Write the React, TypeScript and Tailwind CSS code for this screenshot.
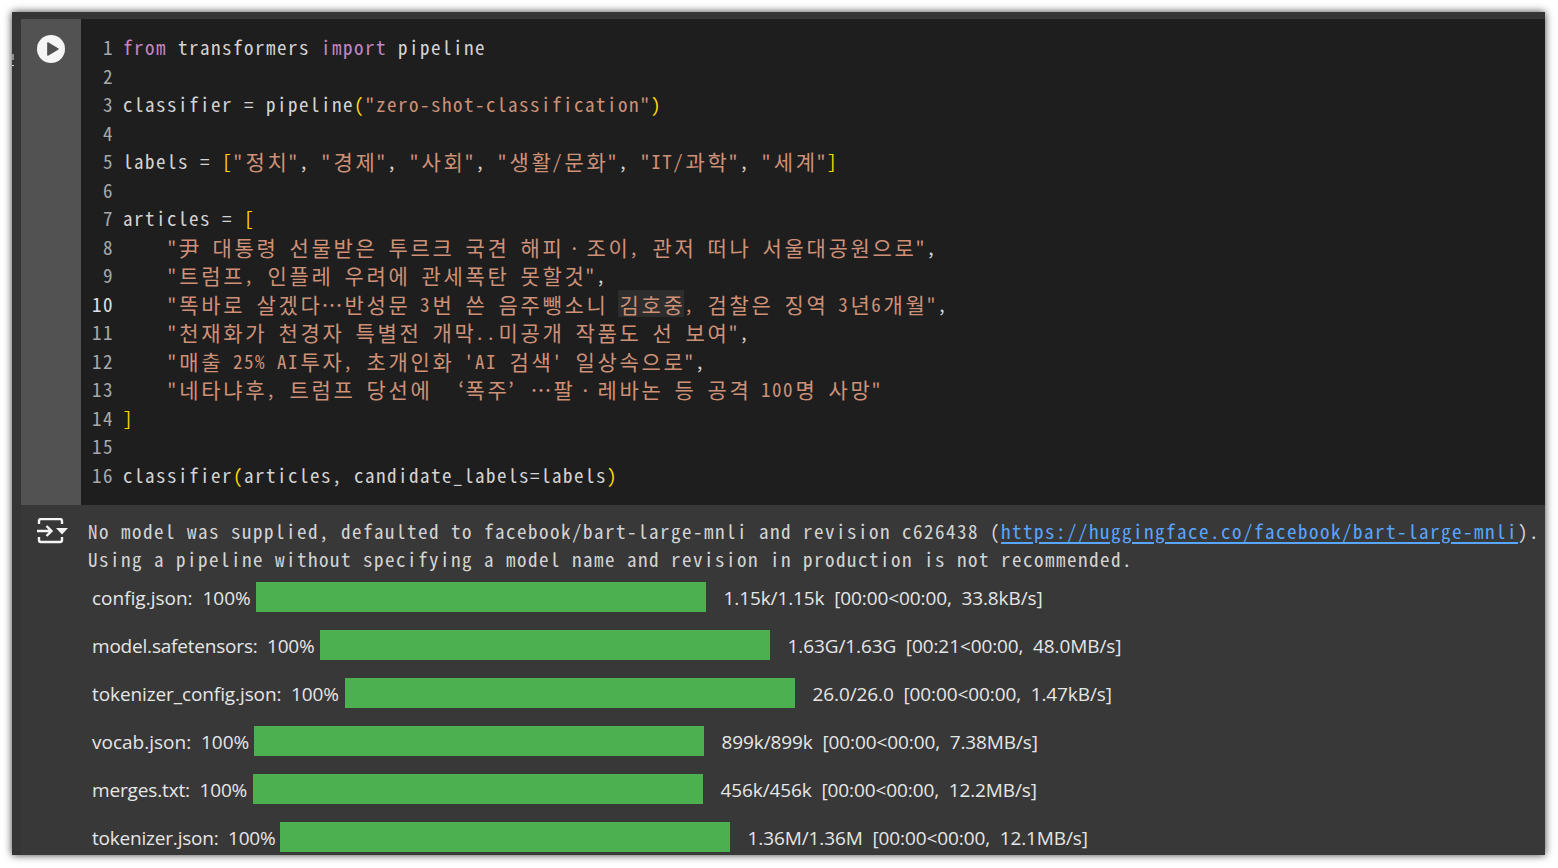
const WIDE = /([\u2018\u2019\u2026\u3000-\u9fff\uac00-\ud7af]+)/;

function cellAlign(ch: string) {
  if (ch === "\u2018") return "text-right";
  if (ch === "\u2019") return "text-left";
  return "text-center";
}

function T({ s }: { s: string }) {
  return (
    <>
      {s.split(WIDE).map((part, i) =>
        part === "" ? null : WIDE.test(part) ? (
          <span key={i}>
            {Array.from(part).map((ch, k) => (
              <span key={k} className={`inline-block w-[22px] text-[21px] tracking-normal leading-none align-[-1px] ${cellAlign(ch)}`}>
                {ch}
              </span>
            ))}
          </span>
        ) : (
          <span key={i}>{part}</span>
        )
      )}
    </>
  );
}

const STR = "text-[#ce9178]";
const KW = "text-[#c586c0]";
const BR = "text-[#ffd700]";

type Tok = [string, string?];

const lines: Tok[][] = [
  [["from ", KW], ["transformers "], ["import ", KW], ["pipeline"]],
  [],
  [["classifier = pipeline"], ["(", BR], ['"zero-shot-classification"', STR], [")", BR]],
  [],
  [["labels = "], ["[", BR], ['"정치"', STR], [", "], ['"경제"', STR], [", "], ['"사회"', STR], [", "], ['"생활/문화"', STR], [", "], ['"IT/과학"', STR], [", "], ['"세계"', STR], ["]", BR]],
  [],
  [["articles = "], ["[", BR]],
  [["    "], ['"尹 대통령 선물받은 투르크 국견 해피ㆍ조이, 관저 떠나 서울대공원으로"', STR], [","]],
  [["    "], ['"트럼프, 인플레 우려에 관세폭탄 못할것"', STR], [","]],
  [["    "], ['"똑바로 살겠다…반성문 3번 쓴 음주뺑소니 ', STR], ["김호중", STR + " bg-[#2d2d2d]"], [', 검찰은 징역 3년6개월"', STR], [","]],
  [["    "], ['"천재화가 천경자 특별전 개막..미공개 작품도 선 보여"', STR], [","]],
  [["    "], ['"매출 25% AI투자, 초개인화 \'AI 검색\' 일상속으로"', STR], [","]],
  [["    "], ['"네타냐후, 트럼프 당선에 ‘폭주’…팔ㆍ레바논 등 공격 100명 사망"', STR]],
  [["]", BR]],
  [],
  [["classifier"], ["(", BR], ["articles, candidate_labels=labels"], [")", BR]],
];

const rows = [
  { label: "config.json:  100%", w: "w-[164px]", t: "tracking-normal", stat: "1.15k/1.15k  [00:00<00:00,  33.8kB/s]" },
  { label: "model.safetensors:  100%", w: "w-[228px]", t: "tracking-[-0.2px]", stat: "1.63G/1.63G  [00:21<00:00,  48.0MB/s]" },
  { label: "tokenizer_config.json:  100%", w: "w-[253px]", t: "tracking-[-0.1px]", stat: "26.0/26.0  [00:00<00:00,  1.47kB/s]" },
  { label: "vocab.json:  100%", w: "w-[162px]", t: "tracking-normal", stat: "899k/899k  [00:00<00:00,  7.38MB/s]" },
  { label: "merges.txt:  100%", w: "w-[161px]", t: "tracking-[-0.15px]", stat: "456k/456k  [00:00<00:00,  12.2MB/s]" },
  { label: "tokenizer.json:  100%", w: "w-[188px]", t: "tracking-[-0.2px]", stat: "1.36M/1.36M  [00:00<00:00,  12.1MB/s]" },
];

const MONO = "font-['Noto_Sans_Mono_CJK_KR','Liberation_Mono',monospace] text-[19px] tracking-[1.5px] font-normal whitespace-pre";

export default function App() {
  return (
    <div className="w-[1558px] h-[868px] bg-white pt-3 pl-3 pr-[13px] pb-[13px] overflow-hidden">
      <div className="relative h-full flex flex-col bg-[#353535] pt-[7px] pl-[9px] shadow-[0_0_8px_rgba(0,0,0,0.75)] overflow-hidden">
        <span className="absolute left-0 top-[42px] w-[2px] h-[6px] bg-[#8a8a8a]" />
        <span className="absolute left-0 top-[53px] w-[2px] h-[1px] bg-[#d0d0d0]" />
        <div className="flex h-[486px] shrink-0">
          <div className="w-[60px] shrink-0 bg-[#525252] pt-4 pl-4">
            <svg width="28" height="28" viewBox="0 0 28 28">
              <circle cx="14" cy="14" r="14" fill="#f5f5f5" />
              <path d="M10.8 7.8 L21.2 14 L10.8 20.2 Z" fill="#505050" stroke="#505050" strokeWidth="1.2" strokeLinejoin="round" />
            </svg>
          </div>
          <div className={`flex-1 bg-[#1e1e1e] pt-[14px] leading-[28.53px] ${MONO}`}>
            {lines.map((toks, i) => (
              <div key={i} className="flex h-[28.53px]">
                <div className={`w-[33px] text-right shrink-0 ${i === 9 ? "text-[#e0e0e0]" : "text-[#a8a8a8]"}`}>{i + 1}</div>
                <div className="ml-[9px] text-[#d4d4d4]">
                  {toks.map(([s, c], j) => (
                    <span key={j} className={c}>
                      <T s={s} />
                    </span>
                  ))}
                </div>
              </div>
            ))}
          </div>
        </div>
        <div className="flex-1 min-h-0 flex bg-[#383838] overflow-hidden">
          <div className="w-[67px] shrink-0 pt-[13px] pl-4">
            <svg width="32" height="26" viewBox="0 0 32 26" fill="none" stroke="#f5f5f5" strokeWidth="2.4">
              <path d="M2 6 V3 a2 2 0 0 1 2 -2 H23 a2 2 0 0 1 2 2 V6" />
              <path d="M2 19 V22 a2 2 0 0 0 2 2 H23 a2 2 0 0 0 2 -2 V19" />
              <path d="M0 13 H14.5 M9.5 8 L14.5 13 L9.5 18" />
              <path d="M19 10 H31 L25 16.5 Z" fill="#f5f5f5" stroke="none" />
            </svg>
          </div>
          <div className="flex-1 min-w-0">
            <div className={`pt-[12px] leading-[28px] text-[#d4d4d4] ${MONO}`}>
              <div>
                No model was supplied, defaulted to facebook/bart-large-mnli and revision c626438 (
                <span className="text-[#58a6ff] underline decoration-2 underline-offset-[3px]">https://huggingface.co/facebook/bart-large-mnli</span>
                ).
              </div>
              <div>Using a pipeline without specifying a model name and revision in production is not recommended.</div>
            </div>
            <div className="mt-[9px] ml-[4px] flex flex-col gap-[18px] font-['Open_Sans',sans-serif] text-[19px] text-[#e6e6e6] whitespace-pre">
              {rows.map((r) => (
                <div key={r.label} className="flex items-center h-[30px] shrink-0">
                  <div className={`${r.w} ${r.t} shrink-0 pt-[2px]`}>{r.label}</div>
                  <div className="w-[450px] h-[30px] shrink-0 bg-[#4caf50]" />
                  <div className="ml-[17.5px] tracking-[-0.1px] pt-[2px]">{r.stat}</div>
                </div>
              ))}
            </div>
          </div>
        </div>
      </div>
    </div>
  );
}
